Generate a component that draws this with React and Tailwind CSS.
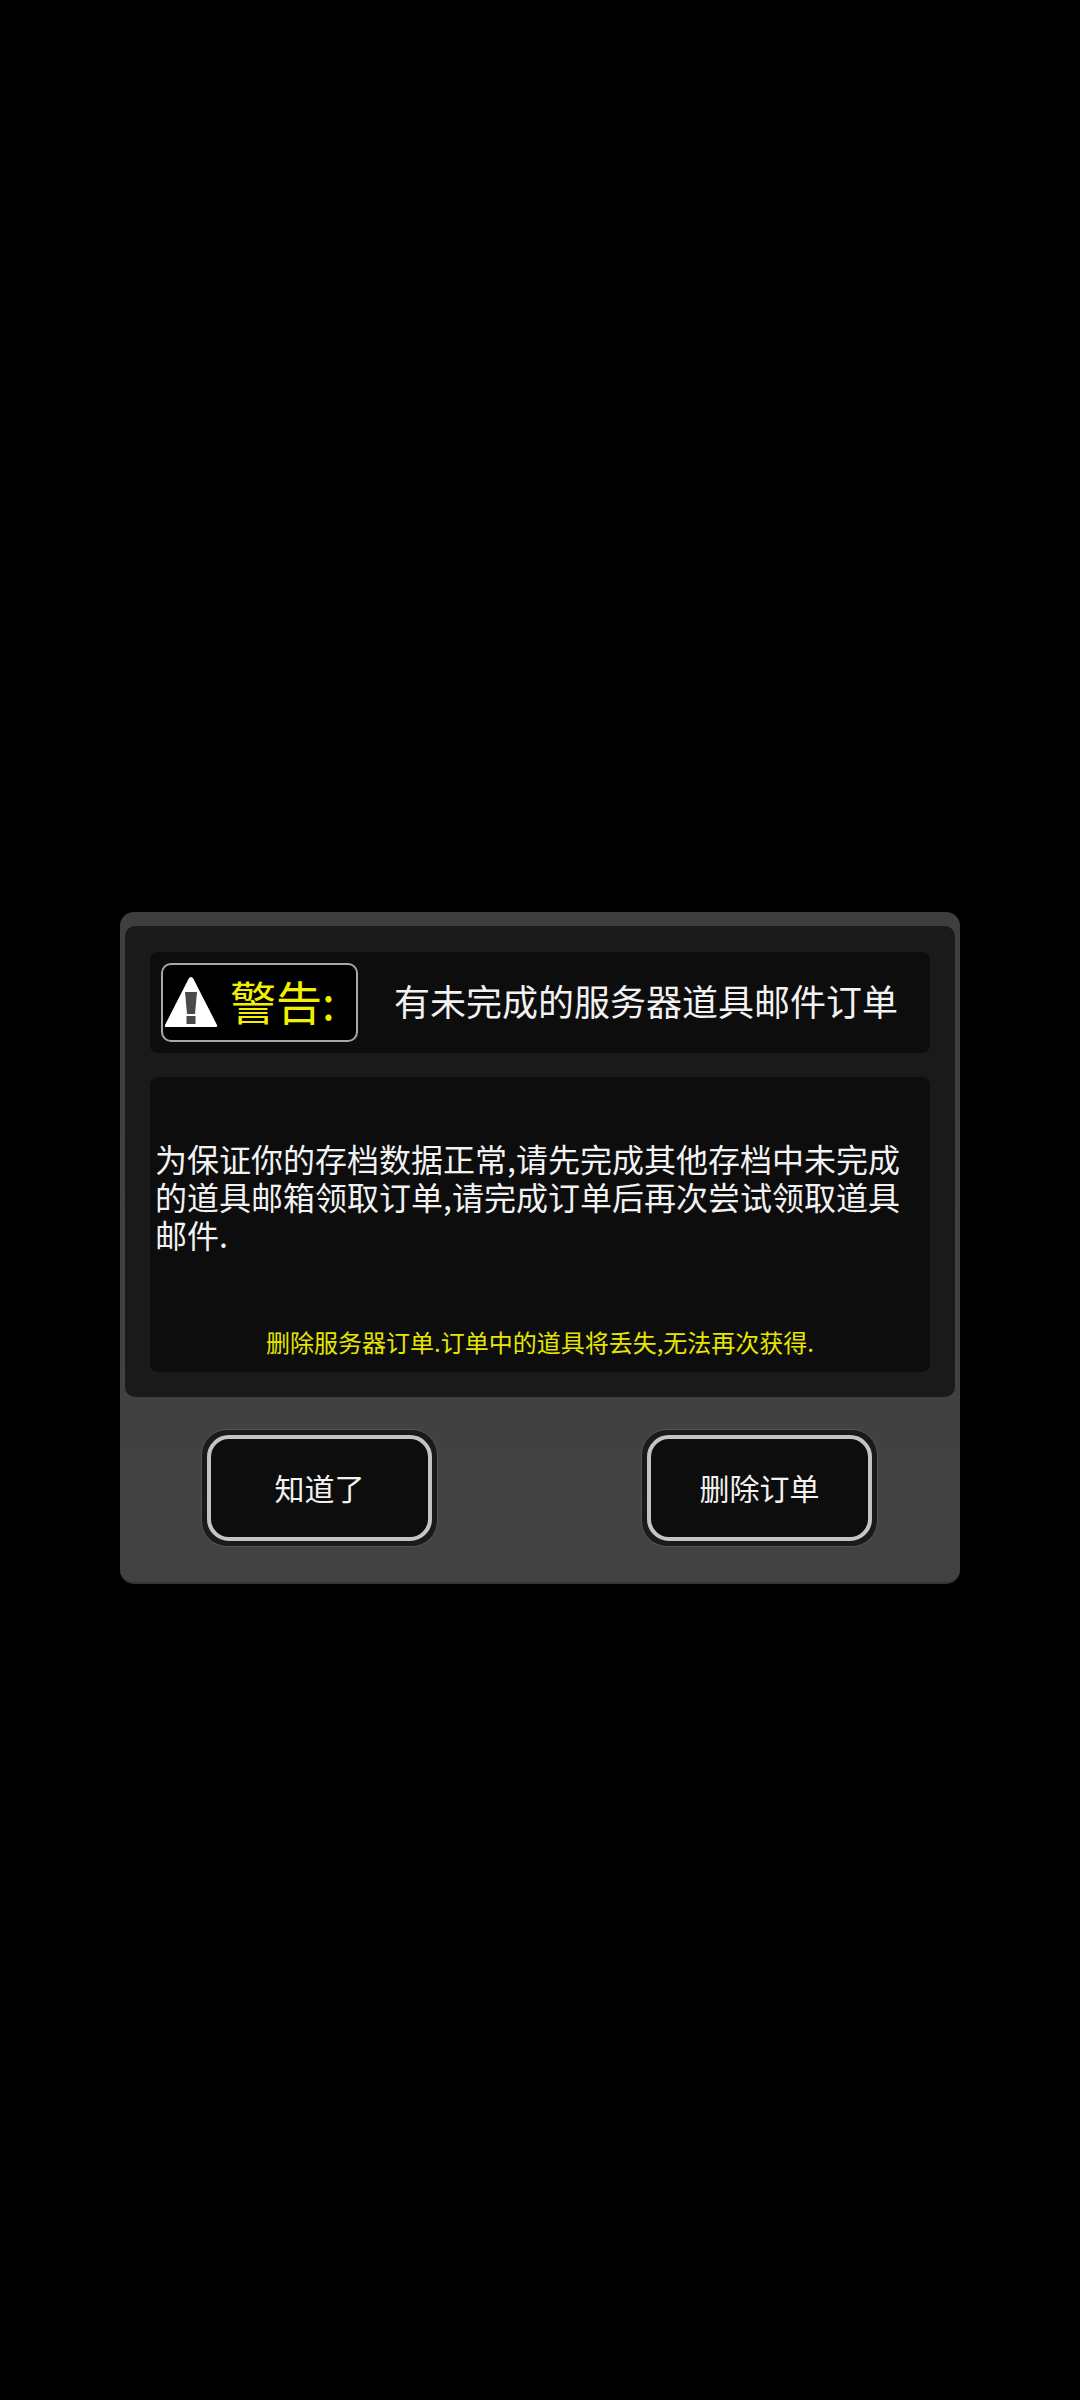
import React from "react";

function WarningIcon() {
  return (
    <svg width="54" height="52" viewBox="0 0 54 52" className="mb-[2px] shrink-0">
      <path d="M27 1 C28 1 29 2 29.500 3 L53 49 C53.500 50.500 53 51 51.500 51 L2.500 51 C1 51 0.500 50.500 1 49 L24.500 3 C25 2 26 1 27 1 Z" fill="#ffffff" />
      <path d="M21 16 L33 16 L31 38 L23 38 Z" fill="#4a4a4a" />
      <rect x="22.500" y="40" width="9" height="8" fill="#4a4a4a" />
    </svg>
  );
}

function DialogButton({ label }) {
  return (
    <div className="rounded-[26px] border border-[#555555] bg-[#1a1a1a] p-[5px]">
      <div className="flex h-[106px] w-[225px] items-center justify-center rounded-[22px] border-[4px] border-[#c4c4c4] bg-[#0d0d0d] pb-[2px] text-[30px] text-[#f2f2f2]">
        {label}
      </div>
    </div>
  );
}

export default function App() {
  return (
    <div className="min-h-[2400px] bg-black pt-[912px] font-['Noto_Sans_CJK_SC','Noto_Sans',sans-serif]">
      <div className="mx-auto h-[672px] w-[840px] rounded-[14px] border-b-2 border-[#333333] bg-gradient-to-b from-[#3e3e3e] to-[#424242] px-[5px] pt-[14px]">
        <div className="flex h-[471px] flex-col gap-[24px] rounded-[10px] bg-[#1a1a1a] px-[25px] pt-[26px]">
          {/* Title bar */}
          <div className="flex h-[101px] items-center rounded-[8px] bg-[#0d0d0d] pl-[11px]">
            <div className="flex h-[79px] w-[197px] items-center rounded-[10px] border-2 border-[#a8a8a8] bg-black pl-[1px]">
              <WarningIcon />
              <span className="mb-[5px] ml-[12px] text-[46px] leading-none text-[#f0f000]">警告:</span>
            </div>
            <span className="mb-[5px] ml-[36px] text-[36px] leading-none text-[#f2f2f2]">有未完成的服务器道具邮件订单</span>
          </div>

          {/* Body */}
          <div className="flex h-[295px] flex-col rounded-[8px] bg-[#0d0d0d] pl-[5px] pr-[28px] pt-[62px]">
            <p className="text-[32px] leading-[38px] text-[#f2f2f2]">
              为保证你的存档数据正常,请先完成其他存档中未完成的道具邮箱领取订单,请完成订单后再次尝试领取道具邮件.
            </p>
            <p className="-mr-[23px] mb-[13px] mt-auto text-center text-[24px] leading-[34px] text-[#e6e600]">
              删除服务器订单.订单中的道具将丢失,无法再次获得.
            </p>
          </div>
        </div>

        {/* Buttons */}
        <div className="flex justify-between pl-[76px] pr-[77px] pt-[32px]">
          <DialogButton label="知道了" />
          <DialogButton label="删除订单" />
        </div>
      </div>
    </div>
  );
}
